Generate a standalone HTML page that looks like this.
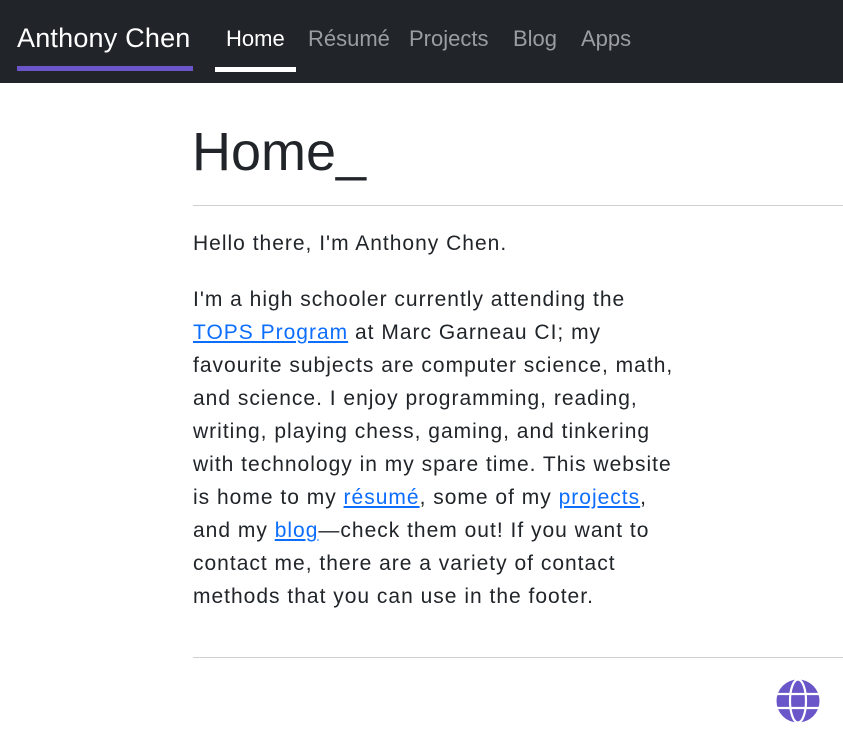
<!DOCTYPE html>
<html><head><meta charset="utf-8"><style>
body{margin:0;width:843px;height:743px;overflow:hidden;background:#fff;font-family:"Liberation Sans",sans-serif;color:#212529}
.nav{position:absolute;left:0;top:0;width:843px;height:83px;background:#212529}
.nav span{position:absolute;top:26px;font-size:22px;color:#9a9da1;white-space:nowrap}
.brand{left:17px;top:23px!important;font-size:27px!important;color:#fff!important;letter-spacing:0.2px}
.ul{position:absolute;height:5px}
h1{position:absolute;left:192px;top:119px;margin:0;font-weight:normal;font-size:54px;line-height:66px}
.hr{position:absolute;left:193px;width:650px;height:1px;background:#cfcfcf}
.p{position:absolute;left:193px;font-size:21px;line-height:33px;white-space:nowrap;letter-spacing:1px}
a{color:#0d6efd}
</style></head><body>
<div class="nav">
<span class="brand">Anthony Chen</span>
<div class="ul" style="left:17px;top:66px;width:176px;background:#6a56c8"></div>
<span style="left:226px;color:#fff">Home</span>
<div class="ul" style="left:215px;top:67px;width:81px;background:#fff"></div>
<span style="left:308px">Résumé</span>
<span style="left:409px">Projects</span>
<span style="left:513px">Blog</span>
<span style="left:581px">Apps</span>
</div>
<h1>Home_</h1>
<div class="hr" style="top:205px"></div>
<div class="p" style="top:227px">Hello there, I'm Anthony Chen.</div>
<div class="p" style="top:283px">I'm a high schooler currently attending the<br>
<a href="#">TOPS Program</a> at Marc Garneau CI; my<br>
favourite subjects are computer science, math,<br>
and science. I enjoy programming, reading,<br>
writing, playing chess, gaming, and tinkering<br>
with technology in my spare time. This website<br>
is home to my <a href="#">résumé</a>, some of my <a href="#">projects</a>,<br>
and my <a href="#">blog</a>—check them out! If you want to<br>
contact me, there are a variety of contact<br>
methods that you can use in the footer.</div>
<div class="hr" style="top:657px"></div>
<svg style="position:absolute;left:776px;top:679px" width="44" height="44" viewBox="0 0 44 44">
<circle cx="22" cy="22" r="21.5" fill="#6a56c8"/>
<g stroke="#fff" stroke-width="2.2" fill="none">
<ellipse cx="22" cy="22" rx="8" ry="21.5"/>
<line x1="0" y1="15" x2="44" y2="15"/><line x1="0" y1="29" x2="44" y2="29"/>
</g></svg>
</body></html>
